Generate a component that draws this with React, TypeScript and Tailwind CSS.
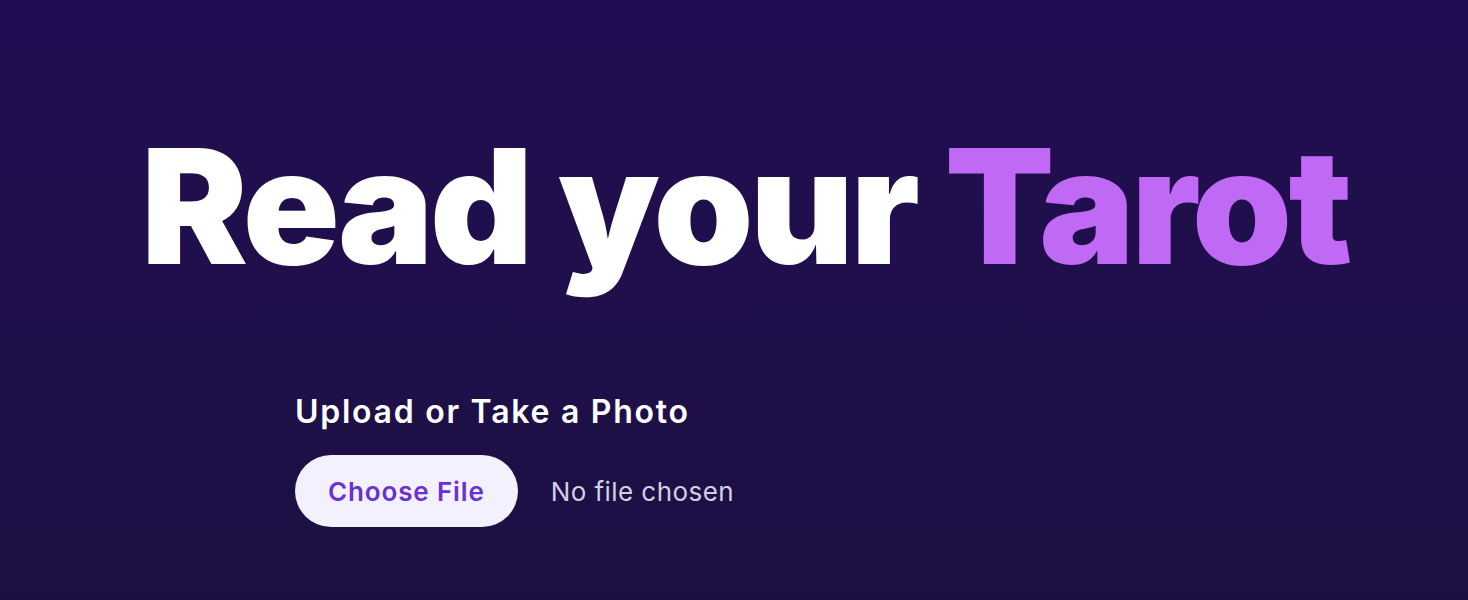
import React from 'react';

export default function App() {
  return (
    <div
      className="flex min-h-[600px] w-full flex-col bg-gradient-to-b from-[#220d52] to-[#1c1043] text-white"
      style={{ fontFamily: 'Inter, "Noto Sans", sans-serif' }}
    >
      <h1 className="mt-[106px] pl-[22px] text-center text-[160px] leading-[200px] font-black tracking-[-0.022em]">
        Read your <span className="text-[#c069f5]">Tarot</span>
      </h1>
      <div className="mx-auto mt-[86px] flex w-[878px] flex-col">
        <label className="text-[32px] leading-[40px] font-semibold tracking-[0.054em]">Upload or Take a Photo</label>
        <div className="mt-[23px] flex items-center gap-[33px]">
          <button className="h-[72px] rounded-full bg-[#f3f1fd] px-[33px] text-[26px] font-semibold tracking-[0.033em] text-[#6a2fd8]">
            Choose File
          </button>
          <span className="text-[26px] tracking-[0.017em] text-[#d3d0e2]">No file chosen</span>
        </div>
      </div>
    </div>
  );
}
